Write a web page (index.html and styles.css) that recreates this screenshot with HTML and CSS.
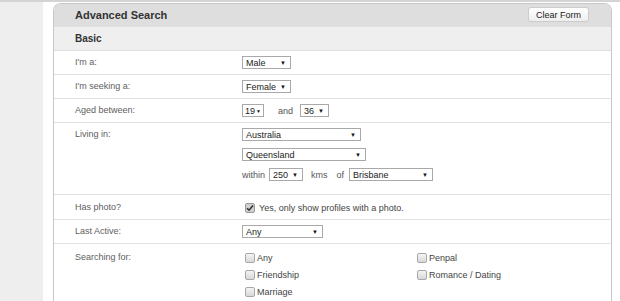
FILE: index.html
```html
<!DOCTYPE html>
<html>
<head>
    <title>Advanced Search</title>
    <link rel="stylesheet" href="styles.css">
</head>
<body>
    <div class="topline"></div>
    <div class="layout">
        <div class="sidebar"></div>
        <div class="main">
            <div class="panel">
                <div class="panel-head">
                    <h1>Advanced Search</h1>
                    <button class="btn">Clear Form</button>
                </div>
                <h2 class="section-head">Basic</h2>

                <div class="row">
                    <div class="label">I'm a:</div>
                    <div class="field"><span class="select w49">Male<i>&#9660;</i></span></div>
                </div>
                <div class="row">
                    <div class="label">I'm seeking a:</div>
                    <div class="field"><span class="select w49">Female<i>&#9660;</i></span></div>
                </div>
                <div class="row">
                    <div class="label">Aged between:</div>
                    <div class="field inline">
                        <span class="select w22">19<i>&#9660;</i></span>
                        <span class="txt">and</span>
                        <span class="select w29">36<i>&#9660;</i></span>
                    </div>
                </div>
                <div class="row tall">
                    <div class="label">Living in:</div>
                    <div class="field stack">
                        <span class="select w119">Australia<i>&#9660;</i></span>
                        <span class="select w124">Queensland<i>&#9660;</i></span>
                        <div class="inline">
                            <span class="txt">within</span>
                            <span class="select w34">250<i>&#9660;</i></span>
                            <span class="txt kms">kms</span>
                            <span class="txt">of</span>
                            <span class="select w84">Brisbane<i>&#9660;</i></span>
                        </div>
                    </div>
                </div>
                <div class="row photo">
                    <div class="label">Has photo?</div>
                    <div class="field">
                        <label class="check on"><span class="box"><svg width="8" height="8" viewBox="0 0 8 8"><path d="M1 4.2 L3 6.2 L7 1.6" fill="none" stroke="#333" stroke-width="1.6"/></svg></span>Yes, only show profiles with a photo.</label>
                    </div>
                </div>
                <div class="row">
                    <div class="label">Last Active:</div>
                    <div class="field"><span class="select w81">Any<i>&#9660;</i></span></div>
                </div>
                <div class="row last">
                    <div class="label">Searching for:</div>
                    <div class="field options">
                        <label class="check"><span class="box"></span>Any</label>
                        <label class="check"><span class="box"></span>Penpal</label>
                        <label class="check"><span class="box"></span>Friendship</label>
                        <label class="check"><span class="box"></span>Romance / Dating</label>
                        <label class="check"><span class="box"></span>Marriage</label>
                    </div>
                </div>
            </div>
        </div>
    </div>
</body>
</html>
```

FILE: styles.css
```css
body { margin: 0; font-family: "Liberation Sans", Arial, sans-serif; font-size: 9px; color: #555; background: #fff; }
.topline { height: 2px; background: #d4d4d4; }
.layout { display: flex; min-height: 299px; }
.sidebar { width: 43px; background: #eee; flex: none; }
.main { padding: 1px 0 0 10px; }
.panel { width: 557px; border: 1px solid #c8c8c8; border-bottom: 0; border-radius: 8px 8px 0 0; overflow: hidden; }
.panel-head { height: 23px; box-sizing: border-box; padding: 0 22px 2px 21px; background: #dedede; display: flex; align-items: center; justify-content: space-between; }
h1 { margin: 0; font-size: 11px; font-weight: bold; color: #333; }
.btn { font-family: inherit; font-size: 9px; color: #222; height: 15px; width: 61px; padding: 0; border: 1px solid #ccc; border-radius: 3px; background: linear-gradient(#fff, #eee); }
.section-head { margin: 0; height: 23px; line-height: 23px; padding-left: 21px; background: #efefef; font-size: 10px; font-weight: bold; color: #333; border-bottom: 1px solid #ddd; }
.row { display: flex; padding: 5px 0; border-bottom: 1px solid #e2e2e2; min-height: 13px; }
.row.tall { padding-bottom: 13px; }
.row.photo { padding: 6px 0 5px; }
.row.last { border-bottom: 0; padding-top: 7px; }
.label { width: 167px; padding-left: 21px; line-height: 13px; flex: none; color: #606060; }
.field { color: #333; }
.inline { display: flex; align-items: center; }
.stack { display: flex; flex-direction: column; align-items: flex-start; gap: 7px; }
.txt { margin: 0 4px 0 0; color: #555; }
.select + .txt { margin-left: 14px; margin-right: 7px; }
.txt.kms { margin-left: 8px; margin-right: 9px; }
.txt + .txt { margin-left: 0; margin-right: 5px; }
.select { display: inline-flex; justify-content: space-between; align-items: center; box-sizing: border-box; height: 13px; padding: 0 4px 0 3px; border: 1px solid #a9a9a9; background: #fff; color: #222; }
.select.w22 { padding: 0 2px 0 2px; }
.select i { font-style: normal; font-size: 6px; color: #111; }
.select.w22 i { font-size: 5px; }
.w22 { width: 22px; } .w29 { width: 29px; } .w34 { width: 34px; } .w49 { width: 49px; }
.w81 { width: 81px; } .w84 { width: 84px; } .w119 { width: 119px; } .w124 { width: 124px; }
.check { display: flex; align-items: center; height: 13px; color: #444; }
.box { width: 10px; height: 10px; box-sizing: border-box; border: 1px solid #a8a8a8; border-radius: 2px; background: linear-gradient(#f4f4f4, #d8d8d8); margin: 0 2px 0 3px; display: flex; align-items: center; justify-content: center; }
.check.on .box { background: #d0d0d0; border-color: #999; margin-right: 4px; }
.options { display: grid; grid-template-columns: 172px auto; row-gap: 4px; }
```
